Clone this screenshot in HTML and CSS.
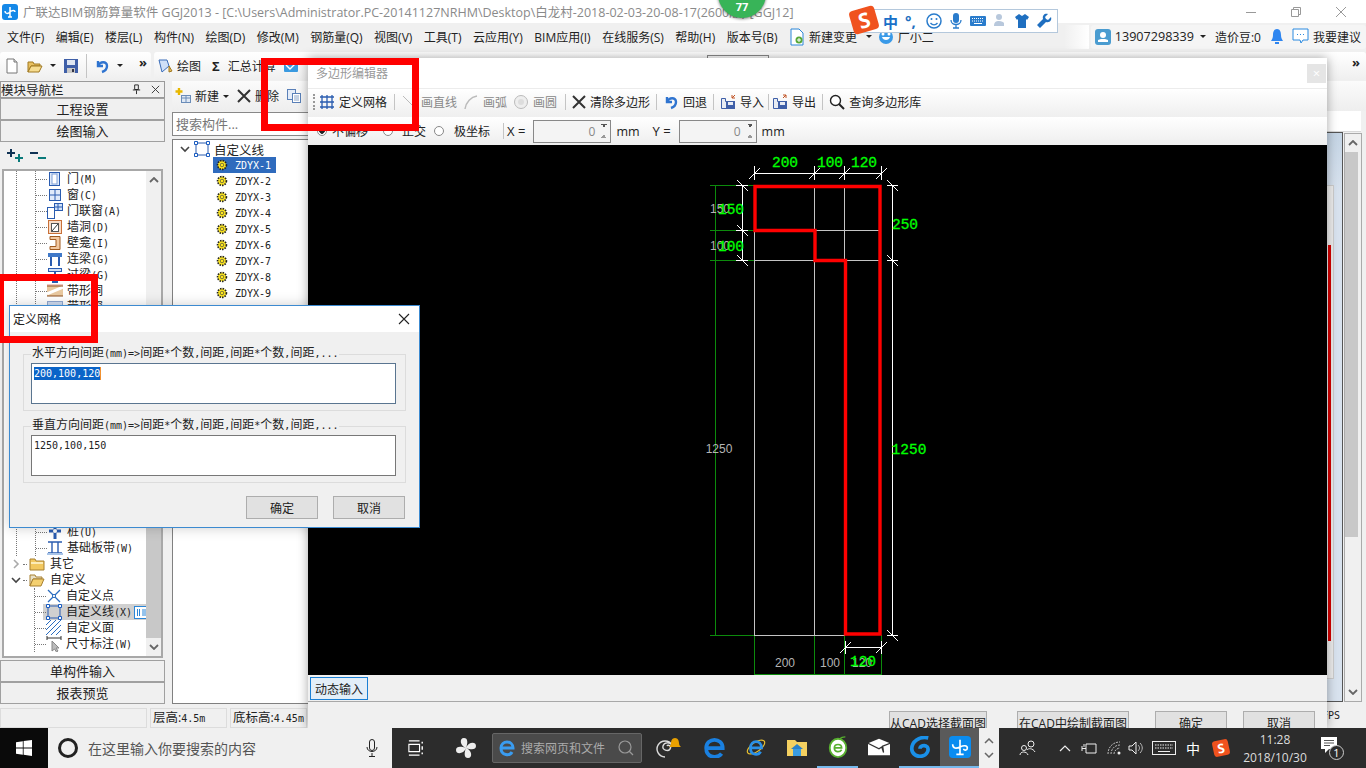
FILE: index.html
```html
<!DOCTYPE html>
<html lang="zh-CN">
<head>
    <meta charset="UTF-8">
    <meta name="viewport" content="width=device-width, initial-scale=1.0">
    <title>广联达BIM钢筋算量软件 GGJ2013</title>
    <link rel="stylesheet" href="styles.css">
</head>
<body>
    <!-- shared icons -->
    <svg class="sprite" aria-hidden="true">
        <defs>
            <symbol id="i-new" viewBox="0 0 16 16"><path d="M3 1h7l3 3v11H3z" fill="#fff" stroke="#777"/><path d="M10 1v3h3" fill="#ddd" stroke="#777"/></symbol>
            <symbol id="i-open" viewBox="0 0 16 16"><path d="M1 4h5l1 2h6v2H4l-3 6z" fill="#e8c060" stroke="#a07820"/><path d="M1 14l3-6h11l-3 6z" fill="#f6dc90" stroke="#a07820"/></symbol>
            <symbol id="i-save" viewBox="0 0 16 16"><rect x="1" y="1" width="14" height="14" fill="#3f5fa8"/><rect x="4" y="2" width="8" height="5" fill="#dfe6f2"/><rect x="4" y="10" width="8" height="5" fill="#c8c8c8"/><rect x="9" y="11" width="2" height="3" fill="#334"/></symbol>
            <symbol id="i-undo" viewBox="0 0 16 16"><path d="M4 3v5h5" fill="none" stroke="#2f74d0" stroke-width="2.4"/><path d="M4 8c2-5 9-5 9 0 0 3-2 5-5 6" fill="none" stroke="#2f74d0" stroke-width="2.4"/></symbol>
            <symbol id="i-cross" viewBox="0 0 14 14"><path d="M1 1l12 12M13 1L1 13" stroke="#333" stroke-width="2"/></symbol>
            <symbol id="i-door" viewBox="0 0 16 16"><rect x="2.5" y="1.5" width="10" height="13" fill="#dfeafa" stroke="#2a5cb0"/><rect x="5" y="3" width="5" height="10" fill="#fff" stroke="#7fa0d8"/></symbol>
            <symbol id="i-window" viewBox="0 0 16 16"><rect x="2.5" y="2.5" width="11" height="11" fill="#dfeafa" stroke="#2a5cb0"/><path d="M8 3v10M3 8h10" stroke="#2a5cb0"/></symbol>
            <symbol id="i-doorwin" viewBox="0 0 16 16"><rect x=".5" y="4.5" width="7" height="11" fill="#fff" stroke="#2a5cb0"/><rect x="7.5" y=".5" width="8" height="7" fill="#cfe0f8" stroke="#2a5cb0"/><path d="M11 1v6M8 4h7" stroke="#2a5cb0"/></symbol>
            <symbol id="i-hole" viewBox="0 0 16 16"><rect x="1.5" y="1.5" width="13" height="13" fill="#f8dcc8" stroke="#c87038"/><rect x="4.5" y="4.5" width="7" height="8" fill="#fff" stroke="#555"/><path d="M5 12l6-7" stroke="#333"/></symbol>
            <symbol id="i-niche" viewBox="0 0 16 16"><path d="M3 1.5h10v13H3v-3h6v-7H3z" fill="#f2c8a0" stroke="#a05a20"/></symbol>
            <symbol id="i-beam" viewBox="0 0 16 16"><rect x="1" y="2" width="14" height="4" fill="#3f78c8"/><path d="M4 6v9M12 6v9" stroke="#2a5cb0" stroke-width="2"/></symbol>
            <symbol id="i-lintel" viewBox="0 0 16 16"><rect x="1.5" y="1.5" width="13" height="3" fill="#cfe0f8" stroke="#2a5cb0"/><path d="M8 5v9M5 15h6" stroke="#2a5cb0" stroke-width="2"/></symbol>
            <symbol id="i-band" viewBox="0 0 16 16"><rect y="1" width="16" height="2" fill="#f0c8c0"/><rect y="3" width="16" height="10" fill="#e8c8a0"/><path d="M0 11L16 4" stroke="#fff" stroke-width="3"/><path d="M0 3h16M0 13h16" stroke="#905020"/></symbol>
            <symbol id="i-bandwin" viewBox="0 0 16 16"><rect x=".5" y="2.5" width="15" height="11" fill="#cfdcf0" stroke="#90a8d0"/></symbol>
            <symbol id="i-pile" viewBox="0 0 16 16"><path d="M8 1v14M2 7h12" stroke="#2a5cb0" stroke-width="3"/><circle cx="8" cy="7" r="2" fill="#fff"/></symbol>
            <symbol id="i-slab" viewBox="0 0 16 16"><path d="M1 2h14M1 13h14M5 2v11M11 2v11" stroke="#2a5cb0" stroke-width="1.4"/><rect y="13" width="16" height="2" fill="#a8c4e8"/></symbol>
            <symbol id="i-folder" viewBox="0 0 16 16"><path d="M1 3h5l1 2h8v9H1z" fill="#f2c860" stroke="#a88030"/><rect x="2" y="6" width="12" height="2" fill="#fcecb8"/></symbol>
            <symbol id="i-folder-open" viewBox="0 0 16 16"><path d="M1 3h5l1 2h6v2H4l-3 7z" fill="#e8e0c8" stroke="#a88030"/><path d="M1 14l3-7h11l-3 7z" fill="#f4d070" stroke="#a88030"/></symbol>
            <symbol id="i-point" viewBox="0 0 16 16"><path d="M2 2l12 12M14 2L2 14" stroke="#2a6cc0" stroke-width="1.3"/><circle cx="8" cy="8" r="1.6" fill="#fff" stroke="#2a6cc0"/></symbol>
            <symbol id="i-line" viewBox="0 0 16 16"><rect x="2" y="2" width="12" height="12" fill="none" stroke="#2a5cb0"/><path d="M.5.5h3v3h-3zM12.500.5h3v3h-3zM.5 12.500h3v3h-3zM12.500 12.500h3v3h-3z" fill="#fff" stroke="#1a5cc0"/></symbol>
            <symbol id="i-hatch" viewBox="0 0 16 16"><path d="M0 5L5 0M0 10L10 0M0 15L15 0M5 15L15 5M10 15l5-5" stroke="#2a6cc0"/></symbol>
            <symbol id="i-dim" viewBox="0 0 16 16"><path d="M1 2h14M1 0v4M15 0v4" stroke="#333"/><path d="M6 5v10l2.5-2 2 3 1.500-1-2-3h3z" fill="#bbb" stroke="#888"/></symbol>
            <symbol id="i-gear" viewBox="0 0 12 12"><circle cx="6" cy="6" r="4.400" fill="#ffe820" stroke="#222" stroke-width="1.700" stroke-dasharray="1.500 1.100"/><circle cx="6" cy="6" r="1.800" fill="#ffe820" stroke="#444" stroke-width=".7"/></symbol>
        </defs>
    </svg>

    <div class="app">
        <header class="titlebar">
            <svg class="app-icon" viewBox="0 0 16 16"><rect width="16" height="16" rx="3" fill="#1488e8"/><path d="M8 3v10M3 7c0 3 3 3 5 1s5-2 5 0M6 13h4" fill="none" stroke="#fff" stroke-width="1.500"/></svg>
            <span class="title-text">广联达BIM钢筋算量软件 GGJ2013 - [C:\Users\Administrator.PC-20141127NRHM\Desktop\白龙村-2018-02-03-20-08-17(2600版)-[GGJ12]</span>
            <div class="win-controls">
                <svg viewBox="0 0 12 12"><path d="M1 6.500h10" stroke="#999"/></svg>
                <svg viewBox="0 0 12 12"><path d="M1.500 3.500h7v7h-7zM3.500 3.500v-2h7v7h-2" fill="none" stroke="#999"/></svg>
                <svg viewBox="0 0 12 12"><path d="M1 1l10 10M11 1L1 11" stroke="#999"/></svg>
            </div>
        </header>

        <nav class="menubar">
            <span>文件(F)</span><span>编辑(E)</span><span>楼层(L)</span><span>构件(N)</span><span>绘图(D)</span><span>修改(M)</span><span>钢筋量(Q)</span><span>视图(V)</span><span>工具(T)</span><span>云应用(Y)</span><span>BIM应用(I)</span><span>在线服务(S)</span><span>帮助(H)</span><span>版本号(B)</span>
            <span class="menu-change">
                <svg viewBox="0 0 16 18"><path d="M2 1h8l4 4v12H2z" fill="#fff" stroke="#2a86d8"/><circle cx="10" cy="12" r="3.500" fill="#58a838"/><path d="M10 10v4M8 12h4" stroke="#fff"/></svg>
                新建变更<i class="caret"></i>
            </span>
            <span class="menu-helper">
                <svg viewBox="0 0 16 16"><circle cx="8" cy="8" r="7" fill="#3a9ae8"/><path d="M4 8c1 4 7 4 8 0z" fill="#fff"/><circle cx="5" cy="5" r="1.500" fill="#fff"/><circle cx="11" cy="5" r="1.500" fill="#fff"/></svg>
                广小二
            </span>
            <div class="menu-user">
                <i class="menu-blank"></i>
                <div class="user-box">
                    <svg class="avatar" viewBox="0 0 16 16"><rect width="16" height="16" rx="3" fill="#4a9cd0"/><circle cx="8" cy="6" r="3" fill="#fff"/><path d="M3 13h10v-2l-3-1H6l-3 1z" fill="#fff"/></svg>
                    <span class="phone">13907298339</span><i class="caret"></i>
                    <span class="beans">造价豆:0</span>
                    <svg class="bell" viewBox="0 0 16 18"><path d="M8 1c3 0 4 3 4 6s1 4 2 6H2c1-2 2-3 2-6s1-6 4-6z" fill="#2f86f0"/><path d="M6 14h4v2H6z" fill="#2f86f0"/></svg>
                    <svg class="chat" viewBox="0 0 17 17"><path d="M1 1h15v11h-5l-2 3-1-3H1z" fill="#fff" stroke="#2a8ae0"/><path d="M5 6.500h1M8 6.500h1M11 6.500h1" stroke="#2a8ae0"/></svg>
                    <span>我要建议</span>
                </div>
            </div>
        </nav>

        <div class="toolbar">
            <div class="tool-group">
                <svg class="ico"><use href="#i-new"/></svg>
                <svg class="ico"><use href="#i-open"/></svg><i class="caret"></i>
                <svg class="ico"><use href="#i-save"/></svg>
                <i class="sep"></i>
                <svg class="ico"><use href="#i-undo"/></svg><i class="caret"></i>
                <b class="more">»</b>
            </div>
            <div class="tool-group tool-group-main">
                <svg class="ico" viewBox="0 0 16 16"><path d="M2 2h8l2 6-7 6z" fill="#cfe0f8" stroke="#3a6cb8"/><path d="M12 8l3 5-3 1z" fill="#e8c060" stroke="#a07820"/></svg>
                <span>绘图</span>
                <b class="sigma">Σ</b>
                <span>汇总计算</span>
                <svg class="ico ico-sum" viewBox="0 0 16 16"><rect x="1" y="2" width="14" height="12" rx="1" fill="#3a9ae0"/><path d="M3 7l4 4 6-6" fill="none" stroke="#fff" stroke-width="1.400"/></svg>
                <i class="tool-combo"></i>
                <b class="more more-end">»</b>
            </div>
        </div>

        <div class="workarea">
            <aside class="nav-panel">
                <div class="panel-head">
                    <span>模块导航栏</span>
                    <svg viewBox="0 0 12 12"><path d="M4 1h4v5H4zM2 6.500h8M6 7v4" fill="none" stroke="#222"/></svg>
                    <svg viewBox="0 0 12 12"><path d="M2 2l8 8M10 2l-8 8" stroke="#333"/></svg>
                </div>
                <button class="nav-btn">工程设置</button>
                <button class="nav-btn">绘图输入</button>
                <div class="tree-tools">
                    <svg viewBox="0 0 18 14"><path d="M4 0v8M0 4h8" stroke="#135" stroke-width="2"/><path d="M12 5v8M8 9h8" stroke="#0a7a7a" stroke-width="2"/></svg>
                    <svg viewBox="0 0 18 14"><path d="M0 4h8" stroke="#135" stroke-width="2"/><path d="M8 9h8" stroke="#0a7a7a" stroke-width="2"/></svg>
                </div>
                <div class="tree-frame">
                    <div class="tree">
                        <div class="branch-outer">
                            <div class="branch">
                                <div class="leaf"><i class="dots"></i><svg class="ico"><use href="#i-door"/></svg><span>门<span class="m">(M)</span></span></div>
                                <div class="leaf"><i class="dots"></i><svg class="ico"><use href="#i-window"/></svg><span>窗<span class="m">(C)</span></span></div>
                                <div class="leaf"><i class="dots"></i><svg class="ico"><use href="#i-doorwin"/></svg><span>门联窗<span class="m">(A)</span></span></div>
                                <div class="leaf"><i class="dots"></i><svg class="ico"><use href="#i-hole"/></svg><span>墙洞<span class="m">(D)</span></span></div>
                                <div class="leaf"><i class="dots"></i><svg class="ico"><use href="#i-niche"/></svg><span>壁龛<span class="m">(I)</span></span></div>
                                <div class="leaf"><i class="dots"></i><svg class="ico"><use href="#i-beam"/></svg><span>连梁<span class="m">(G)</span></span></div>
                                <div class="leaf"><i class="dots"></i><svg class="ico"><use href="#i-lintel"/></svg><span>过梁<span class="m">(G)</span></span></div>
                                <div class="leaf"><i class="dots"></i><svg class="ico"><use href="#i-band"/></svg><span>带形洞</span></div>
                                <div class="leaf"><i class="dots"></i><svg class="ico"><use href="#i-bandwin"/></svg><span>带形窗</span></div>
                                <div class="tree-gap"></div>
                                <div class="leaf"><i class="dots"></i><svg class="ico"><use href="#i-pile"/></svg><span>桩<span class="m">(U)</span></span></div>
                                <div class="leaf"><i class="dots"></i><svg class="ico"><use href="#i-slab"/></svg><span>基础板带<span class="m">(W)</span></span></div>
                            </div>
                        </div>
                        <div class="group-row"><svg class="chev" viewBox="0 0 10 10"><path d="M3 1l4 4-4 4" fill="none" stroke="#aaa" stroke-width="1.600"/></svg><i class="dots-short"></i><svg class="ico"><use href="#i-folder"/></svg><span>其它</span></div>
                        <div class="group-row"><svg class="chev" viewBox="0 0 10 10"><path d="M1 3l4 4 4-4" fill="none" stroke="#444" stroke-width="1.600"/></svg><i class="dots-short"></i><svg class="ico"><use href="#i-folder-open"/></svg><span>自定义</span></div>
                        <div class="branch branch-last">
                            <div class="leaf"><i class="dots"></i><svg class="ico"><use href="#i-point"/></svg><span>自定义点</span></div>
                            <div class="leaf leaf-current"><i class="dots"></i><svg class="ico"><use href="#i-line"/></svg><span class="leaf-label">自定义线<span class="m">(X)</span></span><svg class="leaf-badge" viewBox="0 0 13 13"><rect x=".5" y=".5" width="14" height="12" fill="#fff" stroke="#2a86d8"/><path d="M3.500 3v7M5.500 3v7M9 3v7M11 3v7" stroke="#2a86d8"/></svg></div>
                            <div class="leaf"><i class="dots"></i><svg class="ico"><use href="#i-hatch"/></svg><span>自定义面</span></div>
                            <div class="leaf"><i class="dots"></i><svg class="ico"><use href="#i-dim"/></svg><span>尺寸标注<span class="m">(W)</span></span></div>
                        </div>
                    </div>
                    <div class="scrollbar">
                        <div class="scroll-btn"><svg viewBox="0 0 10 6"><path d="M1 5l4-4 4 4" fill="none" stroke="#666" stroke-width="1.800"/></svg></div>
                        <div class="scroll-track"></div>
                        <div class="scroll-thumb"></div>
                        <div class="scroll-btn"><svg viewBox="0 0 10 6"><path d="M1 1l4 4 4-4" fill="none" stroke="#666" stroke-width="1.800"/></svg></div>
                    </div>
                </div>
                <button class="nav-btn">单构件输入</button>
                <button class="nav-btn">报表预览</button>
            </aside>

            <section class="comp-panel">
                <div class="comp-tools">
                    <svg class="ico" viewBox="0 0 16 16"><path d="M4 0v7M0.500 3.500h7" stroke="#e8b800" stroke-width="2.400"/><rect x="6.500" y="7.500" width="9" height="7" fill="#dfe8f4" stroke="#6a8cb8"/><path d="M7 10h8M11 8v6" stroke="#6a8cb8"/></svg>
                    <span>新建</span><i class="caret"></i>
                    <svg class="ico-x"><use href="#i-cross"/></svg>
                    <span>删除</span>
                    <svg class="ico ico-copy" viewBox="0 0 16 16"><rect x="1.500" y="1.500" width="8" height="10" fill="#e4ecf8" stroke="#5a80b8"/><rect x="6.500" y="5.500" width="8" height="9" fill="#fff" stroke="#5a80b8"/><path d="M8 8h5M8 10h5M8 12h5" stroke="#8aa4c8"/></svg>
                </div>
                <div class="comp-search">搜索构件...</div>
                <div class="comp-tree">
                    <div class="comp-root"><svg class="chev" viewBox="0 0 10 10"><path d="M1 3l4 4 4-4" fill="none" stroke="#444" stroke-width="1.600"/></svg><svg class="ico"><use href="#i-line"/></svg><span>自定义线</span></div>
                    <div class="comp-item comp-item-on"><svg class="gear"><use href="#i-gear"/></svg><span class="code">ZDYX-1</span></div>
                    <div class="comp-item"><svg class="gear"><use href="#i-gear"/></svg><span class="code">ZDYX-2</span></div>
                    <div class="comp-item"><svg class="gear"><use href="#i-gear"/></svg><span class="code">ZDYX-3</span></div>
                    <div class="comp-item"><svg class="gear"><use href="#i-gear"/></svg><span class="code">ZDYX-4</span></div>
                    <div class="comp-item"><svg class="gear"><use href="#i-gear"/></svg><span class="code">ZDYX-5</span></div>
                    <div class="comp-item"><svg class="gear"><use href="#i-gear"/></svg><span class="code">ZDYX-6</span></div>
                    <div class="comp-item"><svg class="gear"><use href="#i-gear"/></svg><span class="code">ZDYX-7</span></div>
                    <div class="comp-item"><svg class="gear"><use href="#i-gear"/></svg><span class="code">ZDYX-8</span></div>
                    <div class="comp-item"><svg class="gear"><use href="#i-gear"/></svg><span class="code">ZDYX-9</span></div>
                </div>
            </section>

            <section class="workspace">
                <div class="ws-head"></div>
                <div class="ws-sub"></div>
                <div class="ws-main">
                    <div class="viewport"><div class="view-frame"><i class="view-red"></i></div></div>
                    <div class="ws-scroll">
                        <div class="scroll-btn"><svg viewBox="0 0 10 6"><path d="M1 5l4-4 4 4" fill="none" stroke="#666" stroke-width="1.800"/></svg></div>
                        <div class="ws-thumb"></div>
                        <div class="scroll-btn ws-down"><svg viewBox="0 0 10 6"><path d="M1 1l4 4 4-4" fill="none" stroke="#666" stroke-width="1.800"/></svg></div>
                    </div>
                </div>
            </section>
        </div>

        <footer class="statusbar">
            <span class="cell cell-wide"></span>
            <span class="cell">层高:<span class="m">4.5m</span></span>
            <span class="cell">底标高:<span class="m">4.45m</span></span>
            <span class="cell-fps">FPS</span>
        </footer>

        <!-- polygon editor window -->
        <div class="editor">
            <div class="editor-title">
                <span>多边形编辑器</span>
                <div class="editor-close">×</div>
            </div>
            <div class="editor-tools">
                <i class="grip"></i>
                <svg class="ico" viewBox="0 0 16 16"><path d="M3 1v14M8 1v14M13 1v14M1 3h14M1 8h14M1 13h14" stroke="#2a5cb0" stroke-width="1.300"/></svg>
                <span class="t-def">定义网格</span><i class="sep"></i>
                <svg class="ico" viewBox="0 0 16 16"><path d="M2 2l12 12" stroke="#bbb"/></svg>
                <span class="t-off">画直线</span>
                <svg class="ico" viewBox="0 0 16 16"><path d="M2 15C3 8 8 3 14 2" fill="none" stroke="#bbb" stroke-width="1.500"/></svg>
                <span class="t-off">画弧</span>
                <svg class="ico" viewBox="0 0 16 16"><circle cx="8" cy="8" r="6.500" fill="#eee" stroke="#bbb"/><circle cx="8" cy="8" r="3" fill="#ddd"/></svg>
                <span class="t-off">画圆</span><i class="sep"></i>
                <svg class="ico-x"><use href="#i-cross"/></svg>
                <span>清除多边形</span><i class="sep"></i>
                <svg class="ico"><use href="#i-undo"/></svg>
                <span>回退</span><i class="sep"></i>
                <svg class="ico" viewBox="0 0 16 16"><path d="M1.500 4.500h4v3h4v7h-8z" fill="#e8ecf4" stroke="#3f5fa8"/><rect x="6" y="7" width="9" height="8" fill="#3f5fa8"/><rect x="8" y="8" width="5" height="3" fill="#e8ecf4"/><path d="M15 1l-3 3M12 1v3h3" fill="none" stroke="#c05020"/></svg>
                <span>导入</span><i class="sep sep-tight"></i>
                <svg class="ico" viewBox="0 0 16 16"><path d="M1.500 4.500h4v3h4v7h-8z" fill="#e8ecf4" stroke="#3f5fa8"/><rect x="6" y="7" width="9" height="8" fill="#3f5fa8"/><rect x="8" y="8" width="5" height="3" fill="#e8ecf4"/><path d="M11 4l3-3M11 1h3v3" fill="none" stroke="#c05020"/></svg>
                <span>导出</span><i class="sep"></i>
                <svg class="ico" viewBox="0 0 16 16"><circle cx="6.500" cy="6.500" r="5" fill="#fff" stroke="#222" stroke-width="1.400"/><path d="M10 10l5 5" stroke="#222" stroke-width="2"/></svg>
                <span>查询多边形库</span>
            </div>
            <div class="editor-coords">
                <i class="radio radio-on"></i><span class="lbl-a">不偏移</span>
                <i class="radio"></i><span class="lbl-b">正交</span>
                <i class="radio"></i><span class="lbl-c">极坐标</span>
                <i class="sep"></i>
                <span class="axis">X =</span>
                <div class="spin"><span>0</span><i class="spin-arrows"></i></div><span class="unit">mm</span>
                <span class="axis axis-y">Y =</span>
                <div class="spin"><span>0</span><i class="spin-arrows"></i></div><span class="unit">mm</span>
            </div>
            <svg class="canvas" viewBox="308 145 1019 530">
                <path class="g-green" d="M715.500 185V635M710 185.500H736M710 230.500H736M710 260.500H736M710 635.500H754M748 185.500H754M748 230.500H754M748 260.500H754M754.500 635V674M814.500 635V674M844.500 635V674M881.500 635V674M754 674.500H882"/>
                <path class="g-grid" d="M754.500 185V635M814.500 185V635M844.500 185V635M754 230.500H881M754 260.500H881M754 635.500H845"/>
                <path class="g-white" d="M754 173.500H881M754.500 166V180M814.500 166V180M844.500 166V180M881.500 166V180M749 179L760 168M809 179L820 168M839 179L850 168M876 179L887 168M742.500 185V260M736 185.500H748M736 230.500H748M736 260.500H748M737 180L748 191M737 225L748 236M737 255L748 266M892.500 185V635M887 185.500H898M887 260.500H898M887 635.500H898M887 180L898 191M887 255L898 266M887 630L898 641M845 647.500H881M845.500 641V654M881.500 641V654M840 653L851 642M876 653L887 642"/>
                <path class="g-poly" d="M755 186.500H880V634H845.500V260.500H815V230.500H755z"/>
                <text class="t-gray" x="720" y="213">150</text>
                <text class="t-gray" x="720" y="250">100</text>
                <text class="t-gray" x="719" y="453">1250</text>
                <text class="t-gray" x="785" y="667">200</text>
                <text class="t-gray" x="830" y="667">100</text>
                <text class="t-gray" x="862" y="667">120</text>
                <text class="t-green" x="785" y="167">200</text>
                <text class="t-green" x="830" y="167">100</text>
                <text class="t-green" x="864" y="167">120</text>
                <text class="t-green" x="731" y="214">150</text>
                <text class="t-green" x="731" y="251">100</text>
                <text class="t-green" x="905" y="229">250</text>
                <text class="t-green" x="909" y="454">1250</text>
                <text class="t-green" x="863" y="666">120</text>
            </svg>
            <div class="editor-input"><button class="btn-input">动态输入</button></div>
            <div class="editor-foot">
                <button class="btn btn-cad1">从CAD选择截面图</button>
                <button class="btn btn-cad2">在CAD中绘制截面图</button>
                <button class="btn btn-ok">确定</button>
                <button class="btn btn-ok">取消</button>
            </div>
        </div>

        <!-- define grid dialog -->
        <div class="dialog">
            <div class="dialog-title">
                <span>定义网格</span>
                <svg viewBox="0 0 12 12"><path d="M1 1l10 10M11 1L1 11" stroke="#222" stroke-width="1.100"/></svg>
            </div>
            <div class="dialog-body">
                <fieldset class="field">
                    <legend>水平方向间距<span class="m">(mm)=&gt;</span>间距<span class="m">*</span>个数<span class="m">,</span>间距<span class="m">,</span>间距<span class="m">*</span>个数<span class="m">,</span>间距<span class="m">,...</span></legend>
                    <div class="field-input field-active"><span class="selected">200,100,120</span></div>
                </fieldset>
                <fieldset class="field">
                    <legend>垂直方向间距<span class="m">(mm)=&gt;</span>间距<span class="m">*</span>个数<span class="m">,</span>间距<span class="m">,</span>间距<span class="m">*</span>个数<span class="m">,</span>间距<span class="m">,...</span></legend>
                    <div class="field-input"><span class="m">1250,100,150</span></div>
                </fieldset>
                <div class="dialog-actions">
                    <button class="btn btn-ok">确定</button>
                    <button class="btn btn-ok">取消</button>
                </div>
            </div>
        </div>

        <div class="mark mark-editor"></div>
        <div class="mark mark-dialog"></div>

        <!-- floating bits over the title bar -->
        <div class="score"><span>77</span></div>
        <div class="ime">
            <div class="ime-logo"><span>S</span></div>
            <b class="ime-zh">中</b>
            <b class="ime-punct">°,</b>
            <svg viewBox="0 0 16 16"><circle cx="8" cy="8" r="7" fill="none" stroke="#2a7ccc" stroke-width="1.500"/><circle cx="5.500" cy="6" r="1" fill="#2a7ccc"/><circle cx="10.500" cy="6" r="1" fill="#2a7ccc"/><path d="M4.500 10c2 2.500 5 2.500 7 0" fill="none" stroke="#2a7ccc" stroke-width="1.300"/></svg>
            <svg viewBox="0 0 16 16"><rect x="5" y="0" width="6" height="10" rx="3" fill="#2a7ccc"/><path d="M3 7c0 6 10 6 10 0M8 12v3M5 15h6" fill="none" stroke="#2a7ccc" stroke-width="1.300"/></svg>
            <svg viewBox="0 0 16 16"><rect y="3" width="16" height="10" rx="1" fill="#2a7ccc"/><path d="M2 5.500h12M2 8h12" stroke="#fff" stroke-dasharray="1 1"/><path d="M4 10.500h8" stroke="#fff"/></svg>
            <svg viewBox="0 0 16 16"><circle cx="7" cy="4" r="3" fill="#b8c8dc"/><path d="M2 13c0-4 2-5 5-5s4 1 5 2v3z" fill="#b8c8dc"/></svg>
            <svg viewBox="0 0 16 16"><path d="M5 1L1 4l2 3 1-1v9h8V6l1 1 2-3-4-3-3 2z" fill="#1f6fc0"/></svg>
            <svg viewBox="0 0 16 16"><path d="M15 4l-3 3-2-1-1-2 3-3C9 0 6 2 7 6L1 12l3 3 6-6c4 1 6-2 5-5z" fill="#1f6fc0"/></svg>
        </div>
    </div>

    <div class="taskbar">
        <div class="tb-start"><svg viewBox="0 0 16 16"><path d="M0 2.200l6.800-1V7.600H0zM7.600 1L16 0v7.600H7.600zM0 8.400h6.800v6.400L0 13.800zM7.600 8.400H16V16l-8.400-1.200z" fill="#fff"/></svg></div>
        <div class="tb-search">
            <i class="cortana"></i>
            <span>在这里输入你要搜索的内容</span>
            <svg viewBox="0 0 12 18"><rect x="3.500" y=".5" width="5" height="11" rx="2.500" fill="none" stroke="#222"/><path d="M1 8c0 6 10 6 10 0M6 14v3M3 17.500h6" fill="none" stroke="#222"/></svg>
        </div>
        <div class="tb-cell tb-view"><svg viewBox="0 0 18 18"><path d="M1 1h12M1 17h12M1 5h12v8H1z" fill="none" stroke="#fff" stroke-width="1.300"/><path d="M16 2v2M16 7v4M16 14v2" stroke="#fff" stroke-width="1.600"/></svg></div>
        <div class="tb-cell tb-fan"><svg viewBox="0 0 22 22"><path d="M11 11C5 9 4 1 9 1c4 0 4 5 2 10zM11 11c2-6 10-7 10-2 0 4-5 4-10 2zM11 11c6 2 7 10 2 10-4 0-4-5-2-10zM11 11c-2 6-10 7-10 2 0-4 5-4 10-2z" fill="#eee"/></svg></div>
        <div class="tb-web">
            <svg viewBox="0 0 18 18"><path d="M3 9h12c0-8-12-8-12 0s9 8 11 4" fill="none" stroke="#3a9cf0" stroke-width="3"/></svg>
            <span>搜索网页和文件</span>
            <svg viewBox="0 0 16 16"><circle cx="7" cy="7" r="6" fill="none" stroke="#999" stroke-width="1.200"/><path d="M11 11l4 4" stroke="#999" stroke-width="1.200"/></svg>
        </div>
        <div class="tb-cell tb-swirl"><svg viewBox="0 0 26 22"><path d="M10 20a8 8 0 1 1 7-12c-2-3-8-3-9 1s5 6 7 3-2-5-3-3" fill="none" stroke="#ddd" stroke-width="1.400"/><path d="M20 1c3 0 4 3 4 5s1 3 2 4H14c1-1 2-2 2-4s1-5 4-5z" fill="#e8a000"/></svg></div>
        <div class="tb-app"><svg viewBox="0 0 20 20"><path d="M2 11h15c0-10-15-10-15 0s11 9 14 5" fill="none" stroke="#1a80e0" stroke-width="3.400"/></svg></div>
        <div class="tb-app"><svg viewBox="0 0 24 24"><ellipse cx="12" cy="12" rx="11" ry="5" fill="none" stroke="#e8c030" stroke-width="1.300" transform="rotate(-35 12 12)"/><path d="M6 13h12c0-9-12-9-12 0s9 8 11 4" fill="none" stroke="#2a90e8" stroke-width="3"/></svg></div>
        <div class="tb-app"><svg viewBox="0 0 22 20"><path d="M1 3h8l2 2h10v14H1z" fill="#f4d060"/><rect x="7" y="11" width="8" height="8" fill="#3a9ce0"/><path d="M5 12h12l-6-5z" fill="#2a80c8"/></svg></div>
        <div class="tb-app tb-open"><svg viewBox="0 0 22 24"><ellipse cx="11" cy="13" rx="9" ry="10" fill="#fff" stroke="#58b030" stroke-width="2"/><path d="M7 13h8c0-5-8-5-8 0s6 5 8 2" fill="none" stroke="#58b030" stroke-width="1.800"/><path d="M13 3c2-2 4-2 6-2" stroke="#58b030" stroke-width="1.500"/></svg></div>
        <div class="tb-app"><svg viewBox="0 0 24 18"><path d="M0 5l12-5 12 5v13H0z" fill="#fff"/><path d="M0 5l12 6 3-2 2 6-1-7 8-3" fill="none" stroke="#333" stroke-width="1.400"/></svg></div>
        <div class="tb-app tb-open"><svg viewBox="0 0 22 24"><path d="M20 2C10 0 2 6 2 14c0 6 6 9 11 8 6-1 8-7 6-10-3-3-8-1-8 2" fill="none" stroke="#1a90e8" stroke-width="4"/></svg></div>
        <div class="tb-app tb-active"><svg viewBox="0 0 24 24"><rect width="24" height="24" rx="4" fill="#0a8cf0"/><path d="M12 4v16M4 9c0 5 4 5 8 3s8-2 8 1c0 3-4 3-4 1M8 20h8" fill="none" stroke="#fff" stroke-width="1.800"/></svg></div>
        <div class="tb-more">
            <svg viewBox="0 0 10 6"><path d="M1 5l4-4 4 4" fill="none" stroke="#666" stroke-width="1.500"/></svg>
            <svg viewBox="0 0 10 6"><path d="M1 1l4 4 4-4" fill="none" stroke="#666" stroke-width="1.500"/></svg>
        </div>
        <div class="tray">
            <svg viewBox="0 0 18 18"><circle cx="12" cy="5" r="3" fill="none" stroke="#eee"/><circle cx="5" cy="9" r="2.500" fill="none" stroke="#eee"/><path d="M8 11c1-2 6-2 8 2M1 16c0-4 7-4 8 0" fill="none" stroke="#eee"/></svg>
            <svg viewBox="0 0 12 8"><path d="M1 7l5-5 5 5" fill="none" stroke="#eee" stroke-width="1.200"/></svg>
            <svg viewBox="0 0 16 16"><path d="M5 4h10v9H5zM1 6v5M1 8.500h4M3 4v3" fill="none" stroke="#eee"/></svg>
            <svg viewBox="0 0 16 16"><path d="M2 14c0-7 5-12 12-12M5 14c0-5 4-9 9-9M8 14c0-3 3-6 6-6" fill="none" stroke="#bbb" stroke-dasharray="2 1"/><circle cx="13" cy="13" r="1.500" fill="#eee"/></svg>
            <svg viewBox="0 0 16 16"><path d="M1 6h3l4-4v12l-4-4H1z" fill="none" stroke="#eee"/><path d="M10 5c2 2 2 4 0 6M12 3c3 3 3 7 0 10" fill="none" stroke="#bbb"/></svg>
            <svg viewBox="0 0 24 16"><rect x=".5" y="1.500" width="23" height="13" fill="none" stroke="#eee"/><path d="M3 5h18M3 8h18" stroke="#eee" stroke-dasharray="1.500 1"/><path d="M6 11.500h12" stroke="#eee"/></svg>
            <span class="tray-ime">中</span>
            <div class="tray-sogou"><span>S</span></div>
            <div class="clock"><span>11:28</span><span>2018/10/30</span></div>
            <div class="notify">
                <svg viewBox="0 0 18 18"><path d="M1 1h16v12H9l-4 4v-4H1z" fill="#fff"/><path d="M4 4.500h10M4 7h10M4 9.500h6" stroke="#555"/></svg>
                <span>1</span>
            </div>
        </div>
    </div>
</body>
</html>
```

FILE: styles.css
```css
* {
    margin: 0;
    padding: 0;
    box-sizing: border-box;
}
html, body {
    width: 1366px;
    height: 768px;
    overflow: hidden;
    font-family: "Open Sans", "Noto Sans CJK SC", sans-serif;
    font-size: 12px;
    color: #222;
    background: #f0f0f0;
}
i, b {
    font-style: normal;
}
button {
    font: inherit;
    color: inherit;
}
.sprite {
    display: none;
}
.m {
    font-family: "DejaVu Sans Mono", monospace;
    font-size: 10px;
}
.ico {
    width: 16px;
    height: 16px;
    flex: none;
}
.ico-x {
    width: 14px;
    height: 14px;
    flex: none;
}
.caret {
    width: 0;
    height: 0;
    flex: none;
    border-left: 3px solid transparent;
    border-right: 3px solid transparent;
    border-top: 3px solid #222;
}
.sep {
    width: 1px;
    height: 16px;
    flex: none;
    background: #c4c4c4;
}

/* main window */
.app {
    position: relative;
    height: 728px;
    display: flex;
    flex-direction: column;
    overflow: hidden;
}
.titlebar {
    height: 23px;
    flex: none;
    display: flex;
    align-items: center;
    background: #fff;
    padding-left: 2px;
}
.app-icon {
    width: 16px;
    height: 16px;
    margin-right: 5px;
}
.title-text {
    font-size: 12.5px;
    color: #8a8a8a;
    white-space: nowrap;
}
.win-controls {
    margin-left: auto;
    display: flex;
    gap: 33px;
    padding-right: 19px;
}
.win-controls svg {
    width: 12px;
    height: 12px;
}
.menubar {
    height: 27px;
    flex: none;
    display: flex;
    align-items: center;
    gap: 11.5px;
    padding-left: 7px;
    background: #f0f0f0;
    white-space: nowrap;
}
.menu-change, .menu-helper {
    display: flex;
    align-items: center;
    gap: 4px;
}
.menu-change svg {
    width: 16px;
    height: 18px;
}
.menu-change .caret {
    margin-left: 5px;
}
.menu-helper {
    margin-left: -6px;
}
.menu-helper svg {
    width: 16px;
    height: 16px;
}
.menu-user {
    margin-left: auto;
    display: flex;
    align-items: center;
    height: 24px;
}
.menu-blank {
    width: 25px;
    height: 24px;
    margin-right: 2px;
    background: linear-gradient(90deg, #f0f0f0, #fff);
}
.user-box {
    display: flex;
    align-items: center;
    height: 24px;
    padding: 0 5px 0 4px;
    border-radius: 3px;
    background: #f5f5f5;
}
.avatar {
    width: 16px;
    height: 16px;
    margin-right: 4px;
}
.phone {
    font-size: 12.6px;
    margin-right: 6px;
}
.beans {
    margin-left: 9px;
}
.bell {
    width: 16px;
    height: 18px;
    margin: 0 7px 0 8px;
}
.chat {
    width: 17px;
    height: 17px;
    margin-right: 4px;
}
.toolbar {
    height: 31px;
    flex: none;
    display: flex;
    align-items: center;
    gap: 3px;
    background: #f0f0f0;
}
.tool-group {
    height: 28px;
    display: flex;
    align-items: center;
    gap: 7px;
    padding-left: 4px;
    width: 151px;
    border-radius: 3px;
    background: linear-gradient(#fff, #efefef);
}
.tool-group .sep {
    height: 24px;
}
.more {
    margin-left: 9px;
    font-size: 13px;
    margin-bottom: 8px;
}
.tool-group-main {
    flex: 1;
    padding-left: 3px;
    gap: 4px;
}
.sigma {
    margin: 0 4px 0 7px;
    font-size: 13px;
}
.ico-sum {
    margin-left: 3px;
}
.tool-combo {
    width: 62px;
    height: 22px;
    margin-left: 404px;
    border: 1px solid #888;
}
.more-end {
    margin-left: auto;
    margin-right: 6px;
}

.workarea {
    flex: 1;
    min-height: 0;
    display: flex;
    padding-bottom: 4px;
}
.nav-panel {
    width: 165px;
    flex: none;
    display: flex;
    flex-direction: column;
}
.panel-head {
    height: 17px;
    flex: none;
    display: flex;
    align-items: center;
    gap: 8px;
    padding-right: 3px;
    border: 1px solid #9a9a9a;
    font-size: 12.5px;
}
.panel-head span {
    flex: 1;
}
.panel-head svg {
    width: 11px;
    height: 11px;
}
.nav-btn {
    height: 22px;
    flex: none;
    padding-bottom: 2px;
    border: 1px solid #a0a0a0;
    background: #f0f0f0;
    font-size: 13px;
}
.tree-tools {
    height: 27px;
    flex: none;
    display: flex;
    align-items: center;
    gap: 5px;
    padding-left: 7px;
}
.tree-tools svg {
    width: 18px;
    height: 14px;
}
.tree-frame {
    flex: 1;
    min-height: 0;
    display: flex;
    margin: 0 2px 2px;
    border: 2px solid #a8a8a8;
    background: #fff;
    overflow: hidden;
}
.tree {
    flex: 1;
    min-width: 0;
    overflow: hidden;
}
.branch-outer {
    margin-left: 12px;
    border-left: 1px dotted #777;
}
.branch {
    margin-left: 18px;
    border-left: 1px dotted #777;
}
.branch-last {
    margin-left: 30px;
}
.leaf, .group-row {
    height: 16px;
    display: flex;
    align-items: center;
    white-space: nowrap;
    line-height: 16px;
}
.leaf > span {
    margin-left: 4px;
}
.dots {
    width: 11px;
    flex: none;
    border-top: 1px dotted #777;
}
.tree-gap {
    height: 209px;
}
.group-row {
    padding-left: 7px;
}
.group-row > span {
    margin-left: 5px;
}
.chev {
    width: 10px;
    height: 10px;
    flex: none;
}
.dots-short {
    width: 4px;
    flex: none;
    margin: 0 2px;
    border-top: 1px dotted #777;
}
.leaf-label {
    flex: none;
    padding-right: 2px;
}
.leaf-current {
    position: relative;
    background: linear-gradient(90deg, #fff 8px, #d0d0d0 8px);
}
.leaf-badge {
    width: 13px;
    height: 13px;
    flex: none;
}
.scrollbar, .ws-scroll {
    width: 15px;
    flex: none;
    display: flex;
    flex-direction: column;
    background: #f0f0f0;
}
.scroll-btn {
    height: 18px;
    flex: none;
    display: flex;
    align-items: center;
    justify-content: center;
}
.scroll-btn svg {
    width: 10px;
    height: 6px;
}
.scroll-track {
    height: 150px;
    flex: none;
}
.scroll-thumb {
    flex: 1;
    background: #c8c8c8;
}

.comp-panel {
    width: 139px;
    flex: none;
    margin-left: 7px;
    display: flex;
    flex-direction: column;
}
.comp-tools {
    height: 30px;
    flex: none;
    display: flex;
    align-items: center;
    gap: 4px;
    padding-left: 3px;
    background: linear-gradient(#fbfbfb, #eee);
}
.comp-tools .ico-x {
    margin-left: 4px;
}
.comp-tools .ico-copy {
    margin-left: 3px;
}
.comp-search {
    height: 24px;
    flex: none;
    margin: 1px 0 3px;
    padding-left: 3px;
    line-height: 22px;
    font-size: 13px;
    color: #777;
    border: 1px solid #888;
    background: #fff;
}
.comp-tree {
    flex: 1;
    padding-top: 1px;
    background: #fff;
    border: 1px solid #808080;
    border-right: 0;
}
.comp-root, .comp-item {
    height: 16px;
    display: flex;
    align-items: center;
}
.comp-root {
    padding-left: 7px;
    font-size: 12.5px;
    gap: 4px;
}
.comp-item {
    margin-left: 40px;
    padding-left: 3px;
    width: 63px;
    position: relative;
    gap: 5px;
}
.comp-item-on {
    background: #2f6bbd;
    color: #fff;
}
.gear {
    width: 12px;
    height: 12px;
    flex: none;
}
.code {
    font-family: "DejaVu Sans Mono", monospace;
    font-size: 10px;
    margin-left: 2px;
}

.workspace {
    flex: 1;
    min-width: 0;
    display: flex;
    flex-direction: column;
}
.ws-head {
    height: 30px;
    flex: none;
    background: linear-gradient(#fbfbfb, #eee);
}
.ws-sub {
    height: 21px;
    flex: none;
    margin-right: 5px;
    background: #fff;
    border-bottom: 1px solid #d8d8d8;
}
.ws-main {
    flex: 1;
    min-height: 0;
    display: flex;
    padding-bottom: 2px;
}
.viewport {
    flex: 1;
    padding: 52px 8px 22px 0;
    background: linear-gradient(#c4d4e4, #d8e2ee 60px);
    border: 1px solid #555;
    border-left: 0;
}
.view-frame {
    position: relative;
    height: 100%;
    background: #ececec;
    border: 1px solid #ccc;
}
.view-red {
    position: absolute;
    top: 59px;
    right: 2px;
    width: 3px;
    height: 396px;
    background: #d40000;
}
.ws-scroll {
    width: 18px;
    margin: 1px 4px 0 1px;
    border: 1px solid #aaa;
}
.ws-thumb {
    height: 385px;
    flex: none;
    margin-right: 3px;
    background: #c8c8c8;
}
.ws-down {
    margin-top: auto;
}
.statusbar {
    height: 20px;
    flex: none;
    display: flex;
    gap: 3px;
    background: #f0f0f0;
}
.cell {
    width: 77px;
    line-height: 18px;
    padding-left: 2px;
    font-size: 12.5px;
    border: 1px solid #dcdcdc;
}
.cell-wide {
    width: 147px;
}
.cell-fps {
    margin-left: auto;
    width: 44px;
    padding-top: 2px;
    font-size: 10px;
    font-family: "DejaVu Sans Mono", monospace;
}

/* polygon editor window */
.editor {
    position: absolute;
    left: 308px;
    top: 58px;
    width: 1019px;
    height: 670px;
    display: flex;
    flex-direction: column;
    background: #f0f0f0;
    box-shadow: 0 0 10px rgba(0, 0, 0, 0.35);
    overflow: hidden;
}
.editor-title {
    height: 31px;
    flex: none;
    display: flex;
    align-items: center;
    justify-content: space-between;
    padding: 0 1px 0 8px;
    background: #fff;
    color: #999;
    border-bottom: 1px solid #ececec;
}
.editor-close {
    width: 19px;
    height: 19px;
    line-height: 18px;
    text-align: center;
    background: #e5e5e5;
    color: #fff;
    font-size: 13px;
}
.editor-tools {
    height: 28px;
    flex: none;
    display: flex;
    align-items: center;
    gap: 4px;
    padding: 0 0 2px 5px;
    background: linear-gradient(#fff, #efefef);
}
.grip {
    height: 16px;
    width: 2px;
    border-left: 2px dotted #999;
}
.t-off {
    color: #888;
    margin-right: 2px;
}
.t-def {
    margin-right: 1px;
}
.editor-tools .sep {
    margin: 0 2px;
}
.editor-tools .sep-tight {
    margin: 0 -1px 0 0;
}
.editor-coords {
    height: 28px;
    flex: none;
    display: flex;
    align-items: center;
    padding-left: 9px;
    background: linear-gradient(#fff, #eee);
}
.radio {
    width: 10px;
    height: 10px;
    flex: none;
    border: 1px solid #888;
    border-radius: 50%;
    background: #fff;
}
.radio-on {
    background: radial-gradient(circle, #222 2.5px, #fff 3px);
}
.lbl-a {
    margin: 0 15px 0 5px;
}
.lbl-b {
    margin: 0 8px 0 9px;
}
.lbl-c {
    margin: 0 13px 0 10px;
}
.axis {
    margin: 0 8px 0 3px;
    font-size: 13px;
}
.axis-y {
    margin-left: 13px;
}
.spin {
    width: 78px;
    height: 23px;
    display: flex;
    align-items: center;
    justify-content: flex-end;
    gap: 6px;
    padding-right: 3px;
    color: #888;
    border: 1px solid #888;
    background: #f4f4f4;
}
.spin-arrows {
    width: 6px;
    height: 14px;
    background:
        linear-gradient(45deg, transparent 50%, #555 50%) left top / 3px 3px no-repeat,
        linear-gradient(-45deg, transparent 50%, #555 50%) right top / 3px 3px no-repeat,
        linear-gradient(135deg, transparent 50%, #999 50%) left bottom / 3px 3px no-repeat,
        linear-gradient(-135deg, transparent 50%, #999 50%) right bottom / 3px 3px no-repeat;
}
.unit {
    margin-left: 5px;
    font-size: 12.5px;
}
.canvas {
    width: 1019px;
    height: 530px;
    flex: none;
    display: block;
    background: #000;
}
.g-green {
    fill: none;
    stroke: #0c8a0c;
}
.g-grid {
    fill: none;
    stroke: #c4c4c4;
}
.g-white {
    fill: none;
    stroke: #fff;
}
.g-poly {
    fill: none;
    stroke: #f00;
    stroke-width: 3.4;
}
.t-green {
    fill: #0f0;
    stroke: #0f0;
    stroke-width: 0.3;
    font-family: "Liberation Mono", monospace;
    font-size: 14.5px;
    text-anchor: middle;
}
.t-gray {
    fill: #b4b4b4;
    font-family: "Liberation Sans", sans-serif;
    font-size: 12px;
    text-anchor: middle;
}
.editor-input {
    height: 27px;
    flex: none;
    padding: 2px;
    border-bottom: 1px solid #a8a8a8;
}
.btn-input {
    width: 58px;
    height: 23px;
    border: 1px solid #1a7fd4;
    background: #e3eef8;
}
.editor-foot {
    flex: 1;
    display: flex;
    padding-top: 9px;
}
.btn {
    height: 23px;
    flex: none;
    border: 1px solid #adadad;
    background: #e1e1e1;
}
.btn-ok {
    width: 72px;
}
.btn-cad1 {
    width: 98px;
    margin-left: 581px;
}
.btn-cad2 {
    width: 112px;
    margin: 0 26px 0 30px;
}
.editor-foot .btn-ok:last-child {
    margin-left: 16px;
}

/* define grid dialog */
.dialog {
    position: absolute;
    left: 9px;
    top: 305px;
    width: 411px;
    height: 223px;
    display: flex;
    flex-direction: column;
    border: 1px solid #3c8ad0;
    background: #f0f0f0;
    box-shadow: 0 0 12px rgba(0, 0, 0, 0.2);
}
.dialog-title {
    height: 26px;
    flex: none;
    display: flex;
    align-items: center;
    justify-content: space-between;
    padding: 0 9px 0 3px;
    background: #fff;
}
.dialog-title svg {
    width: 12px;
    height: 12px;
}
.dialog-body {
    flex: 1;
    padding: 15px 13px 0;
    display: flex;
    flex-direction: column;
    gap: 8px;
}
.field {
    height: 64px;
    padding: 0 9px 0 7px;
    border: 1px solid #dcdcdc;
}
.field legend {
    height: 14px;
    line-height: 12px;
    padding: 0 1px;
    margin: 0 0 2px 0;
    white-space: nowrap;
}
.field-input {
    height: 41px;
    padding: 2px;
    line-height: 13px;
    border: 1px solid #777;
    background: #fff;
}
.field-active {
    border-color: #5a7590;
}
.selected {
    display: inline-block;
    font-family: "DejaVu Sans Mono", monospace;
    font-size: 10px;
    background: #0a64c8;
    color: #fff;
    border-right: 1px solid #f09030;
}
.dialog-actions {
    display: flex;
    justify-content: flex-end;
    gap: 15px;
    margin-top: 5px;
    padding-right: 1px;
}

/* red notes drawn on the screenshot */
.mark {
    position: absolute;
    border: 7px solid #f00;
}
.mark-editor {
    left: 261px;
    top: 58px;
    width: 158px;
    height: 73px;
}
.mark-dialog {
    left: -3px;
    top: 274px;
    width: 101px;
    height: 69px;
    border-left-width: 7px;
}

.score {
    position: absolute;
    left: 718px;
    top: -30px;
    width: 48px;
    height: 48px;
    padding-top: 30px;
    text-align: center;
    line-height: 14px;
    font-size: 11px;
    font-weight: 700;
    color: #fff;
    border-radius: 50%;
    background: #38b458;
    box-shadow: 0 1px 3px rgba(0, 0, 0, 0.5);
}
.ime {
    position: absolute;
    left: 858px;
    top: 9px;
    width: 200px;
    height: 24px;
    display: flex;
    align-items: center;
    gap: 6px;
    padding-left: 24px;
    background: #fff;
    border: 1px solid #b4c8dc;
}
.ime svg {
    width: 16px;
    height: 16px;
    flex: none;
}
.ime-logo {
    position: absolute;
    left: -8px;
    top: -2px;
    width: 26px;
    height: 24px;
    line-height: 24px;
    text-align: center;
    font-size: 21px;
    font-weight: 700;
    color: #fff;
    border-radius: 4px;
    background: #f0521e;
    transform: rotate(-16deg);
}
.ime-zh {
    width: 16px;
    font-size: 15px;
    color: #1a70c8;
}
.ime-punct {
    width: 15px;
    font-size: 15px;
    color: #1f6fc0;
}

/* taskbar */
.taskbar {
    height: 40px;
    display: flex;
    background: #2c2c2c;
    position: relative;
}
.tb-start {
    width: 48px;
    flex: none;
    display: flex;
    align-items: center;
    justify-content: center;
    background: #0a0a0a;
}
.tb-start svg {
    width: 16px;
    height: 16px;
}
.tb-search {
    width: 344px;
    flex: none;
    display: flex;
    align-items: center;
    padding-left: 10px;
    background: #f0f0f0;
    font-size: 14px;
    color: #555;
}
.cortana {
    width: 20px;
    height: 20px;
    margin-right: 10px;
    flex: none;
    border: 3px solid #222;
    border-radius: 50%;
}
.tb-search svg {
    width: 12px;
    height: 18px;
    margin-left: 110px;
}
.tb-cell {
    flex: none;
    display: flex;
    align-items: center;
    justify-content: center;
}
.tb-view {
    width: 48px;
}
.tb-view svg {
    width: 16px;
    height: 16px;
}
.tb-fan {
    width: 52px;
}
.tb-fan svg {
    width: 22px;
    height: 22px;
}
.tb-web {
    width: 150px;
    height: 30px;
    margin-top: 5px;
    flex: none;
    display: flex;
    align-items: center;
    padding: 0 7px 0 5px;
    gap: 5px;
    color: #aaa;
    background: #4a4a4a;
    border: 1px solid #666;
    border-radius: 2px;
}
.tb-web svg:first-child {
    width: 18px;
    height: 18px;
}
.tb-web svg:last-child {
    width: 16px;
    height: 16px;
    margin-left: auto;
}
.tb-swirl {
    width: 52px;
}
.tb-swirl svg {
    width: 26px;
    height: 22px;
}
.tb-app {
    width: 41px;
    flex: none;
    display: flex;
    align-items: center;
    justify-content: center;
    border-bottom: 2px solid transparent;
}
.tb-app svg {
    width: 22px;
    height: 22px;
}
.tb-open {
    border-bottom-color: #76b9ed;
}
.tb-active {
    width: 39px;
    background: #5a5a5a;
    border-bottom-color: #76b9ed;
}
.tb-more {
    width: 20px;
    flex: none;
    display: flex;
    flex-direction: column;
    align-items: center;
    justify-content: space-around;
    padding: 6px 0;
    background: #f0f0f0;
}
.tb-more svg {
    width: 10px;
    height: 6px;
}
.tray {
    flex: 1;
    display: grid;
    grid-template-columns: 40px 22px 25px 22px 24px 34px 27px 27px 80px 24px;
    align-items: center;
    padding-left: 20px;
}
.tray svg:nth-child(1) {
    width: 18px;
    height: 18px;
}
.tray svg:nth-child(2) {
    width: 12px;
    height: 8px;
}
.tray svg:nth-child(3), .tray svg:nth-child(4), .tray svg:nth-child(5) {
    width: 16px;
    height: 16px;
}
.tray svg:nth-child(6) {
    width: 24px;
    height: 16px;
}
.tray-ime {
    font-size: 14px;
    color: #fff;
}
.tray-sogou {
    width: 16px;
    height: 16px;
    line-height: 16px;
    text-align: center;
    font-size: 13px;
    font-weight: 700;
    color: #fff;
    border-radius: 3px;
    background: #f0521e;
    transform: rotate(-12deg);
}
.clock {
    width: 70px;
    display: flex;
    flex-direction: column;
    align-items: center;
    gap: 3px;
    line-height: 15px;
    color: #ddd;
}
.notify {
    position: relative;
    width: 24px;
    height: 24px;
}
.notify svg {
    width: 16px;
    height: 16px;
}
.notify span {
    position: absolute;
    right: 0;
    bottom: 0;
    width: 15px;
    height: 15px;
    line-height: 13px;
    text-align: center;
    font-size: 11px;
    color: #fff;
    border: 1px solid #ccc;
    border-radius: 50%;
    background: #2c2c2c;
}
```
